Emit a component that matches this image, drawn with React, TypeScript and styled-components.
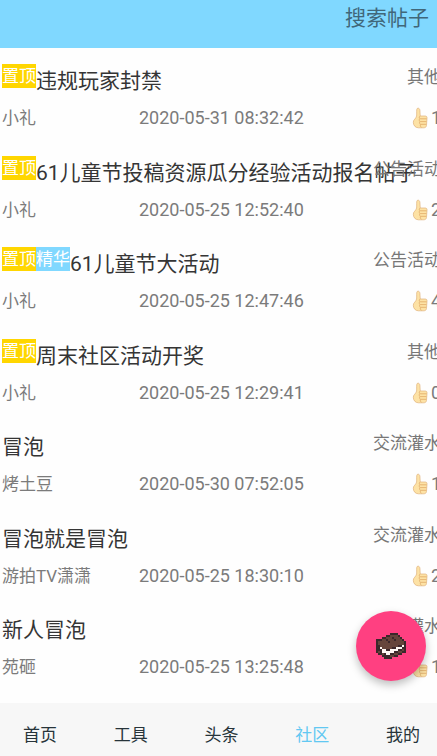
import React from "react";
import styled, { createGlobalStyle } from "styled-components";

const Global = createGlobalStyle`
  * { box-sizing: border-box; }
  body {
    margin: 0;
    background: #fefefe;
    font-family: Roboto, "Noto Sans CJK SC", sans-serif;
    overflow-x: hidden;
  }
`;

const Page = styled.div`
  min-height: 100vh;
  display: flex;
  flex-direction: column;
`;

const Header = styled.header`
  height: 48px;
  padding: 2px 8px 0;
  display: flex;
  justify-content: flex-end;
  align-items: flex-start;
  background: #80d8ff;
`;

const SearchButton = styled.button`
  padding: 0;
  border: 0;
  background: none;
  font: inherit;
  font-size: 21px;
  line-height: 32px;
  color: #40677a;
`;

const ListFrame = styled.main`
  flex: 1;
  display: flex;
  overflow: hidden;
`;

const List = styled.ul`
  flex: 1;
  margin: 0 -4px 0 0;
  padding: 0 0 14px;
  list-style: none;
  display: grid;
  grid-auto-rows: 1fr;
`;

const Post = styled.li`
  padding: 16px 0 0 2px;
  display: flex;
  flex-direction: column;
  gap: 7px;
`;

const TitleRow = styled.div`
  display: grid;
  grid-template-columns: minmax(0, 1fr) auto;
  align-items: start;
  height: 34px;
`;

const TitleLine = styled.div`
  display: flex;
  align-items: flex-start;
  white-space: nowrap;
`;

const Tag = styled.span<{ $tone: "gold" | "blue" }>`
  height: 24px;
  line-height: 25px;
  font-size: 17px;
  color: #fff;
  background: ${(p) => (p.$tone === "gold" ? "#ffd600" : "#80d8ff")};
`;

const Title = styled.h2`
  margin: 0;
  font-size: 21px;
  font-weight: 400;
  line-height: 34px;
  color: #353535;
`;

const Category = styled.span`
  font-size: 17px;
  line-height: 26px;
  color: #777;
`;

const MetaRow = styled.div`
  display: grid;
  grid-template-columns: 137px minmax(0, 1fr) auto;
  font-size: 17px;
  line-height: 26px;
  color: #7b7b7b;
`;

const PostTime = styled.time`
  font-size: 18px;
`;

const Likes = styled.span`
  display: flex;
  align-items: center;
  gap: 2px;
  font-size: 18px;
`;

const Nav = styled.nav`
  position: sticky;
  bottom: 0;
  height: 53px;
  padding: 8px 0 0;
  display: flex;
  justify-content: space-between;
  background: #f7f7f7;
`;

const NavLink = styled.a<{ $active: boolean }>`
  flex: 0 0 auto;
  padding: 0 23px;
  display: flex;
  align-items: center;
  justify-content: center;
  font-size: 17px;
  text-decoration: none;
  color: ${(p) => (p.$active ? "#62c8f2" : "#27343a")};

  &:last-child { padding-right: 17px; }
`;

const Fab = styled.button`
  position: fixed;
  right: 11px;
  bottom: 75px;
  width: 70px;
  height: 70px;
  padding: 0;
  border: 0;
  border-radius: 50%;
  display: flex;
  align-items: center;
  justify-content: center;
  background: #ff4081;
  box-shadow: 0 4px 9px rgba(0, 0, 0, 0.25);
`;

const ThumbIcon = () => (
  <svg width="17" height="22" viewBox="0 0 17 22" aria-hidden="true">
    <path
      d="M5.400 1.300C6.700.8 7.700 1.700 7.900 3.200L8.200 9h4.900c1.500 0 2 .8 1.900 2l-.5 7.300c-.1 1.700-1.200 2.500-2.700 2.500H6.500C3.500 20.800 1.300 18.500 1.300 15.200c0-2.600 2.700-3.400 3.300-6.200.4-2-.5-7.100.8-7.700z"
      fill="#fde2a5"
      stroke="#dfb27c"
      strokeWidth=".7"
    />
    <path
      d="M8.200 9c-1 .5-1.200 1.700-.4 2.700-.8.9-.7 2 .1 2.800-.6.900-.4 2 .5 2.700-.4 1.200.1 2.300 1 3.200M8.200 11.800h6.400M8.300 14.600h6.100M8.700 17.300h5.500"
      fill="none"
      stroke="#dfaa66"
      strokeWidth=".8"
    />
  </svg>
);

const SPRITE = [
  ".......dddd....",
  ".....ddbbbbd...",
  "...ddbbbdbbbd..",
  "dddbbdbbbdbbbd.",
  "dbbbbbdbbbbbbbd",
  "dbbbbbbbbbbbbbd",
  "ddbbbbbbbbbddwd",
  "ddwbbbbbddwwwdd",
  "dddwwddwwwwddbd",
  "dbdwwwwwwddbbdd",
  ".ddbdwwddbbdd..",
  "...ddddbbdd....",
  "....dddd.......",
];
const SPRITE_COLORS: Record<string, string> = { d: "#3c282b", b: "#66453b", w: "#fff8f3" };

const BookIcon = () => (
  <svg width="30" height="26" viewBox="0 0 15 13" shapeRendering="crispEdges" aria-hidden="true">
    {SPRITE.flatMap((line, y) =>
      [...line].map((c, x) =>
        SPRITE_COLORS[c] ? <rect key={`${x}-${y}`} x={x} y={y} width="1" height="1" fill={SPRITE_COLORS[c]} /> : null
      )
    )}
  </svg>
);

type PostData = {
  title: string;
  author: string;
  date: string;
  category: string;
  likes: number;
  pinned?: boolean;
  featured?: boolean;
};

const POSTS: PostData[] = [
  { title: "违规玩家封禁", author: "小礼", date: "2020-05-31 08:32:42", category: "其他", likes: 1, pinned: true },
  { title: "61儿童节投稿资源瓜分经验活动报名帖子", author: "小礼", date: "2020-05-25 12:52:40", category: "公告活动", likes: 2, pinned: true },
  { title: "61儿童节大活动", author: "小礼", date: "2020-05-25 12:47:46", category: "公告活动", likes: 4, pinned: true, featured: true },
  { title: "周末社区活动开奖", author: "小礼", date: "2020-05-25 12:29:41", category: "其他", likes: 0, pinned: true },
  { title: "冒泡", author: "烤土豆", date: "2020-05-30 07:52:05", category: "交流灌水", likes: 1 },
  { title: "冒泡就是冒泡", author: "游拍TV潇潇", date: "2020-05-25 18:30:10", category: "交流灌水", likes: 2 },
  { title: "新人冒泡", author: "苑砸", date: "2020-05-25 13:25:48", category: "交流灌水", likes: 1 },
];

const TABS = ["首页", "工具", "头条", "社区", "我的"];

export default function App() {
  return (
    <Page lang="zh-CN">
      <Global />
      <Header>
        <SearchButton type="button">搜索帖子</SearchButton>
      </Header>
      <ListFrame>
        <List>
          {POSTS.map((p) => (
            <Post key={p.title}>
              <TitleRow>
                <TitleLine>
                  {p.pinned && <Tag $tone="gold">置顶</Tag>}
                  {p.featured && <Tag $tone="blue">精华</Tag>}
                  <Title>{p.title}</Title>
                </TitleLine>
                <Category>{p.category}</Category>
              </TitleRow>
              <MetaRow>
                <span>{p.author}</span>
                <PostTime>{p.date}</PostTime>
                <Likes>
                  <ThumbIcon />
                  {p.likes}
                </Likes>
              </MetaRow>
            </Post>
          ))}
        </List>
      </ListFrame>
      <Nav>
        {TABS.map((t) => (
          <NavLink key={t} href="#" $active={t === "社区"} aria-current={t === "社区" ? "page" : undefined}>
            {t}
          </NavLink>
        ))}
      </Nav>
      <Fab type="button" aria-label="发帖">
        <BookIcon />
      </Fab>
    </Page>
  );
}
